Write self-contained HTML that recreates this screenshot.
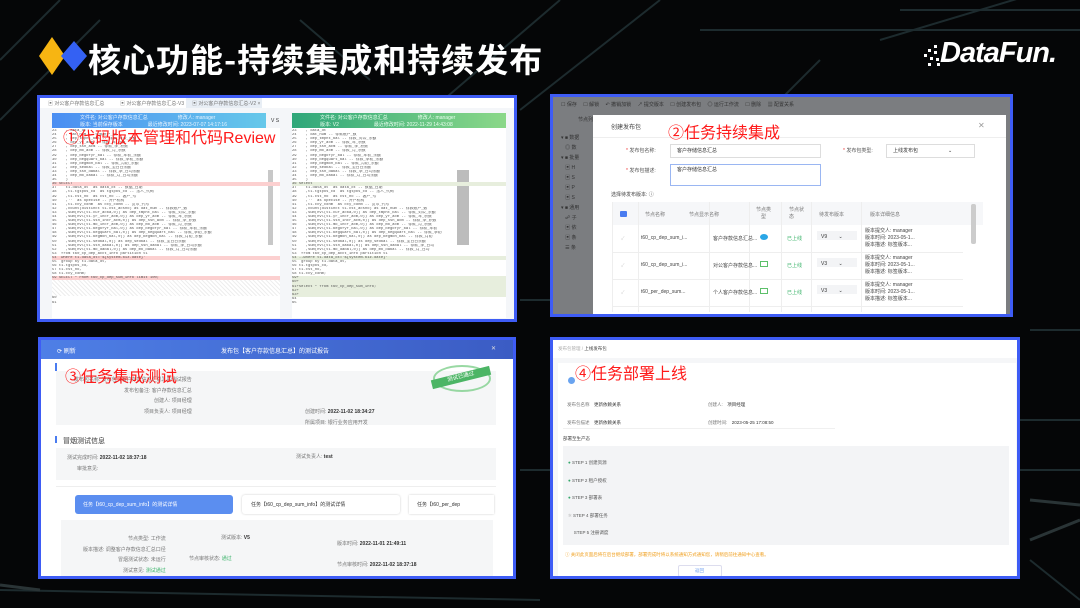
<!DOCTYPE html>
<html><head><meta charset="utf-8">
<style>
*{margin:0;padding:0;box-sizing:border-box}
body{width:1080px;height:608px;overflow:hidden;background:#050607;font-family:"Liberation Sans","Noto Sans CJK SC",sans-serif;position:relative}
.abs{position:absolute}
.panel{position:absolute;border:3px solid #3e5cf5;background:#fff;overflow:hidden}
.red{position:absolute;color:#ff1a1a;font-size:16px;white-space:nowrap;z-index:5}
.code{position:absolute;font-family:"Liberation Mono",monospace;font-size:3.8px;line-height:4.1px;color:#555}
.code div{height:4.1px;overflow:hidden;white-space:pre}
.pk{background:#fcd0d0}
.gr{background:#e7eedd}
.t{font-size:6px;color:#666;white-space:nowrap;position:absolute}
.s{font-size:5px;color:#777;white-space:nowrap;position:absolute}
</style></head><body>
<svg class="abs" style="left:0;top:0" width="1080" height="608">
<g stroke="#1d2b2e" stroke-width="2" fill="none">
<path d="M560 0 L420 120 M660 0 L520 110 M820 60 L620 260 M900 10 L1080 10 M700 30 L1080 30 M880 40 L1080 -20 M0 60 L60 0 M0 120 L100 20 M300 20 L370 80"/>
<path d="M1030 330 L1080 330 M1020 420 L1080 420 M1020 470 L1080 470 M1030 560 L1080 600 M0 590 L540 600 M520 300 L550 300 M520 470 L550 470"/>
</g>
<g stroke="#2a3436" stroke-width="3" fill="none"><path d="M1030 540 L1080 520 M1030 500 L1080 505 M0 585 L40 590"/></g>
</svg>
<svg class="abs" style="left:39px;top:37px" width="50" height="38">
<polygon points="13,0 26,19 13,38 0,19" fill="#f7b512"/>
<polygon points="35,4 48,19 35,34 22,19" fill="#3461f3"/>
</svg>
<div class="abs" style="left:88px;top:34px;color:#fff;font-size:33px;font-weight:bold;letter-spacing:1px;font-family:'Noto Sans CJK SC',sans-serif">核心功能-持续集成和持续发布</div>
<svg class="abs" style="left:924px;top:45px" width="20" height="22"><g fill="#fff"><rect x="10" y="0" width="3" height="3"/><rect x="4" y="4" width="3" height="3"/><rect x="10" y="6" width="3" height="3"/><rect x="0" y="9" width="3" height="3"/><rect x="6" y="12" width="3" height="3"/><rect x="12" y="13" width="3" height="3"/><rect x="4" y="18" width="3" height="3"/><rect x="13" y="18" width="3" height="3"/></g></svg>
<div class="abs" style="left:940px;top:37px;color:#fff;font-size:29px;font-weight:bold;font-style:italic;letter-spacing:-1px">DataFun.</div>

<!-- PANEL 1 -->
<div class="panel" style="left:37px;top:95px;width:480px;height:227px;background:#f4f6f9">
 <div class="abs" style="left:0;top:0;width:474px;height:10px;background:#fff"></div>
 <div class="s" style="left:8px;top:2px">▣ 对公客户存款信息汇总</div>
 <div class="s" style="left:80px;top:2px">▣ 对公客户存款信息汇总-V3</div>
 <div class="abs" style="left:146px;top:0;width:76px;height:10px;background:#e8eef5"></div>
 <div class="s" style="left:152px;top:2px">▣ 对公客户存款信息汇总-V2 ×</div>
 <div class="abs" style="left:12px;top:15px;width:214px;height:15px;background:linear-gradient(90deg,#4b8ef2,#66c8ea)"></div>
 <div class="s" style="left:40px;top:16px;color:#e8f4ff">文件名: 对公客户存款信息汇总　　　　　　修改人: manager<br>版本: 当前保存版本　　　　　最近修改时间: 2023-07-07 14:17:16</div>
 <div class="abs" style="left:252px;top:15px;width:214px;height:15px;background:linear-gradient(90deg,#2fa77a,#8bd889)"></div>
 <div class="s" style="left:280px;top:16px;color:#eaffef">文件名: 对公客户存款信息汇总　　　　　　修改人: manager<br>版本: V2　　　　　　　最近修改时间: 2022-11-29 14:43:08</div>
 <div class="s" style="left:231px;top:20px;color:#333">V S</div>
 <div class="abs" style="left:12px;top:30px;width:228px;height:190px;background:#fff"></div>
 <div class="abs" style="left:252px;top:30px;width:214px;height:190px;background:#fff"></div>
 <div class="abs" style="left:228px;top:72px;width:5px;height:75px;background:#c8c8c8"></div>
 <div class="abs" style="left:417px;top:72px;width:12px;height:75px;background:#bcbcbc"></div>
 <div class="code" style="left:12px;top:31px;width:228px"><div>23    , data_dt</div><div>24    , dat_num -- 存款账户_数</div><div>25    , dep_tmpnt_bal -- 存款_对公_余额</div><div>26    , dep_yr_acm -- 存款_年_积数</div><div>27    , dep_ssn_acm -- 存款_季_积数</div><div>28    , dep_mo_acm -- 存款_月_积数</div><div>29    , dep_begofyr_bal -- 存款_年初_余额</div><div>30    , dep_begquart_bal -- 存款_季初_余额</div><div>31    , dep_begmon_bal -- 存款_月初_余额</div><div>32    , dep_sedbal -- 存款_至日日余额</div><div>33    , dep_ssn_dabal -- 存款_季_日均余额</div><div>34    , dep_mo_dabal -- 存款_月_日均余额</div><div>35    )</div><div class="pk">36 SELECT</div><div>37    t1.data_dt  as data_dt -- 数据_日期</div><div>38    ,t1.tgtpos_cd  as tgtpos_cd -- 法人_代码</div><div>39    ,t1.cst_no  as cst_no -- 客户_号</div><div>40    ,''  as opecise -- 开户机构</div><div>41    ,t1.ccy_cdnm  as ccy_cdnm -- 货币_代号</div><div>42    ,count(distinct t1.cst_acsno) as dat_num -- 存款账户_数</div><div>43    ,sum(nvl(t1.cur_acba,0)) as dep_tmpnt_bal -- 存款_对公_余额</div><div>44    ,sum(nvl(t1.yr_incr_acm,0)) as dep_yr_acm -- 存款_年_积数</div><div>45    ,sum(nvl(t1.ssn_incr_acm,0)) as dep_ssn_acm -- 存款_季_积数</div><div>46    ,sum(nvl(t1.mo_incr_acm,0)) as dep_mo_acm -- 存款_月_积数</div><div>47    ,sum(nvl(t1.begofyr_bal,0)) as dep_begofyr_bal -- 存款_年初_余额</div><div>48    ,sum(nvl(t1.begquart_bal,0)) as dep_begquart_bal -- 存款_季初_余额</div><div>49    ,sum(nvl(t1.begmon_bal,0)) as dep_begmon_bal -- 存款_月初_余额</div><div>50    ,sum(nvl(t1.sedbal,0)) as dep_sedbal -- 存款_至日日余额</div><div>51    ,sum(nvl(t1.ssn_dabal,0)) as dep_ssn_dabal -- 存款_季_日均余额</div><div>52    ,sum(nvl(t1.mo_dabal,0)) as dep_mo_dabal -- 存款_月_日均余额</div><div>53  from t60_cp_dep_acct_info partition t1</div><div class="pk">54  where t1.data_dt='${system.biz.date}'</div><div>55  group by t1.data_dt,</div><div>56 t1.tgtpos_cd,</div><div>57 t1.cst_no,</div><div>58 t1.ccy_cdnm;</div><div class="pk">59 SELECT * FROM t60_cp_dep_sum_info limit 100;</div><div style="height:16px;background:repeating-linear-gradient(45deg,#eee 0 1px,#fff 1px 3px)"></div><div>60</div><div>61</div></div>
 <div class="code" style="left:252px;top:31px;width:214px"><div>23    , data_dt</div><div>24    , dat_num -- 存款账户_数</div><div>25    , dep_tmpnt_bal -- 存款_对公_余额</div><div>26    , dep_yr_acm -- 存款_年_积数</div><div>27    , dep_ssn_acm -- 存款_季_积数</div><div>28    , dep_mo_acm -- 存款_月_积数</div><div>29    , dep_begofyr_bal -- 存款_年初_余额</div><div>30    , dep_begquart_bal -- 存款_季初_余额</div><div>31    , dep_begmon_bal -- 存款_月初_余额</div><div>32    , dep_sedbal -- 存款_至日日余额</div><div>33    , dep_ssn_dabal -- 存款_季_日均余额</div><div>34    , dep_mo_dabal -- 存款_月_日均余额</div><div>35    )</div><div class="gr">36 select</div><div>37    t1.data_dt  as data_dt -- 数据_日期</div><div>38    ,t1.tgtpos_cd  as tgtpos_cd -- 法人_代码</div><div>39    ,t1.cst_no  as cst_no -- 客户_号</div><div>40    ,''  as opecise -- 开户机构</div><div>41    ,t1.ccy_cdnm  as ccy_cdnm -- 货币_代号</div><div>42    ,count(distinct t1.cst_acsno) as dat_num -- 存款账户_数</div><div>43    ,sum(nvl(t1.cur_acba,0)) as dep_tmpnt_bal -- 存款_对公_余额</div><div>44    ,sum(nvl(t1.yr_incr_acm,0)) as dep_yr_acm -- 存款_年_积数</div><div>45    ,sum(nvl(t1.ssn_incr_acm,0)) as dep_ssn_acm -- 存款_季_积数</div><div>46    ,sum(nvl(t1.mo_incr_acm,0)) as dep_mo_acm -- 存款_月_积数</div><div>47    ,sum(nvl(t1.begofyr_bal,0)) as dep_begofyr_bal -- 存款_年初</div><div>48    ,sum(nvl(t1.begquart_bal,0)) as dep_begquart_bal -- 存款_季初</div><div>49    ,sum(nvl(t1.begmon_bal,0)) as dep_begmon_bal -- 存款_月初</div><div>50    ,sum(nvl(t1.sedbal,0)) as dep_sedbal -- 存款_至日日余额</div><div>51    ,sum(nvl(t1.ssn_dabal,0)) as dep_ssn_dabal -- 存款_季_日均</div><div>52    ,sum(nvl(t1.mo_dabal,0)) as dep_mo_dabal -- 存款_月_日均</div><div>53  from t60_cp_dep_acct_info partition t1</div><div class="gr">54 --where t1.data_dt='${system.biz.date}'</div><div>55  group by t1.data_dt,</div><div>56 t1.tgtpos_cd,</div><div>57 t1.cst_no,</div><div>58 t1.ccy_cdnm;</div><div class="gr">59+</div><div class="gr">60+</div><div class="gr">61+select * from t60_cp_dep_sum_info;</div><div class="gr">62+</div><div class="gr">63+</div><div>64</div><div>65</div></div>
 <div class="red" style="left:23px;top:26px">①代码版本管理和代码Review</div>
</div>

<!-- PANEL 2 -->
<div class="panel" style="left:550px;top:94px;width:463px;height:223px;background:#7b7d80">
 <div class="s" style="left:8px;top:4px;color:#333">☐ 保存　 ☐ 解锁　 ↶ 撤销加锁　 ↗ 提交版本　 ☐ 创建发布包　 ◎ 运行工作流　 ☐ 删除　 ▦ 配置关系</div>
 <div class="s" style="left:25px;top:19px;color:#333">节点列</div>
 <div class="s" style="left:8px;top:36px;color:#333;line-height:10px">▾ ■ 数据<br>&nbsp;&nbsp;&nbsp;◎ 数<br>▾ ■ 批量<br>&nbsp;&nbsp;&nbsp;▣ H<br>&nbsp;&nbsp;&nbsp;▣ S<br>&nbsp;&nbsp;&nbsp;▣ P<br>&nbsp;&nbsp;&nbsp;▣ S<br>▾ ■ 通用<br>&nbsp;&nbsp;&nbsp;☍ 子<br>&nbsp;&nbsp;&nbsp;▣ 依<br>&nbsp;&nbsp;&nbsp;▣ 条<br>&nbsp;&nbsp;&nbsp;☰ 条</div>
 <div class="abs" style="left:40px;top:18px;width:413px;height:205px;background:#fff">
  <div class="t" style="left:18px;top:7px;color:#444">创建发布包</div>
  <div class="t" style="left:385px;top:6px;color:#999;font-size:8px">✕</div>
  <div class="abs" style="left:0;top:22px;width:413px;height:1px;background:#eee"></div>
  <div class="s" style="left:33px;top:32px;color:#555"><span style="color:#e33">*</span> 发布包名称:</div>
  <div class="abs" style="left:77px;top:29px;width:151px;height:14px;border:1px solid #ddd"></div>
  <div class="s" style="left:84px;top:32px;color:#333">客户存储信息汇总</div>
  <div class="s" style="left:250px;top:32px;color:#555"><span style="color:#e33">*</span> 发布包类型:</div>
  <div class="abs" style="left:293px;top:29px;width:89px;height:14px;border:1px solid #ddd"></div>
  <div class="s" style="left:300px;top:32px;color:#333">上线发布包　　　　　　⌄</div>
  <div class="s" style="left:33px;top:52px;color:#555"><span style="color:#e33">*</span> 发布包描述:</div>
  <div class="abs" style="left:77px;top:49px;width:151px;height:22px;border:1px solid #9ab6f2"></div>
  <div class="s" style="left:84px;top:51px;color:#333">客户存储信息汇总</div>
  <div class="s" style="left:18px;top:76px;color:#444">选择待发布版本: ⓘ</div>
  <div class="abs" style="left:19px;top:87px;width:370px;height:110px;border-left:1px solid #eee">
   <div class="abs" style="left:0;top:0;width:370px;height:23px;background:#f6f7f9"></div>
   <div class="abs" style="left:7px;top:9px;width:7px;height:6px;background:#4a7cf0;border-radius:1px"></div>
   <div class="s" style="left:32px;top:9px">节点名称</div>
   <div class="s" style="left:76px;top:9px">节点显示名称</div>
   <div class="s" style="left:143px;top:5px;text-align:center;line-height:7px">节点类<br>型</div>
   <div class="s" style="left:176px;top:5px;line-height:7px">节点状<br>态</div>
   <div class="s" style="left:206px;top:9px">待发布版本</div>
   <div class="s" style="left:257px;top:9px">版本详细信息</div>
   <div class="abs" style="left:0;top:50px;width:350px;height:1px;background:#eee"></div>
   <div class="abs" style="left:0;top:77px;width:350px;height:1px;background:#eee"></div>
   <div class="abs" style="left:0;top:104px;width:350px;height:1px;background:#eee"></div>
   <div class="abs" style="left:25px;top:0;width:1px;height:110px;background:#eee"></div>
   <div class="abs" style="left:96px;top:0;width:1px;height:110px;background:#eee"></div>
   <div class="abs" style="left:136px;top:0;width:1px;height:110px;background:#eee"></div>
   <div class="abs" style="left:168px;top:0;width:1px;height:110px;background:#eee"></div>
   <div class="abs" style="left:198px;top:0;width:1px;height:110px;background:#eee"></div>
   <div class="abs" style="left:248px;top:0;width:1px;height:110px;background:#eee"></div>
   <div class="abs" style="left:358px;top:2px;width:5px;height:40px;background:#ccc;border-radius:2px"></div>
   <div class="s" style="left:8px;top:33px;color:#ccc">✓</div><div class="s" style="left:8px;top:60px;color:#ccc">✓</div><div class="s" style="left:8px;top:87px;color:#ccc">✓</div>
   <div class="s" style="left:28px;top:33px;color:#444">t60_cp_dep_sum_i...</div>
   <div class="s" style="left:28px;top:60px;color:#444">t60_cp_dep_sum_i...</div>
   <div class="s" style="left:28px;top:87px;color:#444">t60_per_dep_sum...</div>
   <div class="s" style="left:100px;top:33px;color:#444">客户存款信息汇总...</div>
   <div class="s" style="left:100px;top:60px;color:#444">对公客户存款信息...</div>
   <div class="s" style="left:100px;top:87px;color:#444">个人客户存款信息...</div>
   <div class="abs" style="left:147px;top:32px;width:8px;height:6px;background:#2aa6e6;border-radius:50%"></div>
   <div class="abs" style="left:147px;top:59px;width:8px;height:6px;border:1px solid #5cc06a"></div>
   <div class="abs" style="left:147px;top:86px;width:8px;height:6px;border:1px solid #5cc06a"></div>
   <div class="s" style="left:174px;top:33px;color:#3bb36a">已上线</div>
   <div class="s" style="left:174px;top:60px;color:#3bb36a">已上线</div>
   <div class="s" style="left:174px;top:87px;color:#3bb36a">已上线</div>
   <div class="abs" style="left:204px;top:29px;width:40px;height:9px;background:#f3f4f6"></div>
   <div class="abs" style="left:204px;top:56px;width:40px;height:9px;background:#f3f4f6"></div>
   <div class="abs" style="left:204px;top:83px;width:40px;height:9px;background:#f3f4f6"></div>
   <div class="s" style="left:208px;top:31px;color:#333">V9　　 ⌄</div>
   <div class="s" style="left:208px;top:58px;color:#333">V3　　 ⌄</div>
   <div class="s" style="left:208px;top:85px;color:#333">V3　　 ⌄</div>
   <div class="s" style="left:252px;top:26px;color:#444;line-height:7px">版本提交人: manager<br>版本时间: 2023-05-1...<br>版本描述: 标签版本...</div>
   <div class="s" style="left:252px;top:53px;color:#444;line-height:7px">版本提交人: manager<br>版本时间: 2023-05-1...<br>版本描述: 标签版本...</div>
   <div class="s" style="left:252px;top:80px;color:#444;line-height:7px">版本提交人: manager<br>版本时间: 2023-05-1...<br>版本描述: 标签版本...</div>
  </div>
 </div>
 <div class="red" style="left:115px;top:22px">②任务持续集成</div>
</div>

<!-- PANEL 3 -->
<div class="panel" style="left:38px;top:337px;width:478px;height:242px;background:#fff">
 <div class="abs" style="left:0;top:0;width:472px;height:19px;background:linear-gradient(90deg,#4e7fe6,#3b5cc4)"></div>
 <div class="s" style="left:16px;top:6px;color:#fff;font-size:6px">⟳ 刷新</div>
 <div class="s" style="left:180px;top:6px;color:#fff;font-size:6px">发布包【客户存款信息汇总】的测试报告</div>
 <div class="s" style="left:450px;top:5px;color:#ddd;font-size:6px">✕</div>
 <div class="abs" style="left:15px;top:31px;width:440px;height:54px;background:#f5f6f7"></div>
 <div class="abs" style="left:14px;top:23px;width:2px;height:8px;background:#4a7cf0"></div>
 <div class="s" style="left:33px;top:35px;line-height:10.7px;text-align:right">发布包名称: 发布包【客户存款信息汇总】的测试报告<br>发布包备注: 客户存款信息汇总<br>　创建人: 项目经理<br>项目负责人: 项目经理</div>
 <div class="s" style="left:264px;top:67px;line-height:10.7px">创建时间: <b style="color:#333">2022-11-02 18:34:27</b><br>所属项目: 银行业务应用开发</div>
 <div class="abs" style="left:392px;top:25px;width:58px;height:27px;border:2px solid #7fcf8c;border-radius:50%;opacity:.8"></div>
 <div class="abs" style="left:390px;top:33px;width:60px;height:9px;background:#4cb565;transform:rotate(-14deg);color:#fff;font-size:5.5px;text-align:center;line-height:9px">测试已通过</div>
 <div class="abs" style="left:14px;top:96px;width:2px;height:7px;background:#4a7cf0"></div>
 <div class="t" style="left:22px;top:96px;color:#333;font-size:7px">冒烟测试信息</div>
 <div class="abs" style="left:15px;top:108px;width:440px;height:32px;background:#f5f6f7"></div>
 <div class="s" style="left:26px;top:113px;line-height:10.7px">测试完成时间: <b style="color:#333">2022-11-02 18:37:18</b><br>　　审批意见:</div>
 <div class="s" style="left:255px;top:113px">测试负责人: <b style="color:#333">test</b></div>
 <div class="abs" style="left:15px;top:146px;width:440px;height:1px;background:#eee"></div>
 <div class="abs" style="left:34px;top:155px;width:158px;height:19px;background:#5b8ef0;border-radius:3px"></div>
 <div class="s" style="left:42px;top:161px;color:#fff">任务【t60_cp_dep_sum_info】的测试详情</div>
 <div class="abs" style="left:201px;top:155px;width:158px;height:19px;background:#fff;border-radius:3px;box-shadow:0 0 2px #ccc"></div>
 <div class="s" style="left:210px;top:161px;color:#333">任务【t60_cp_dep_sum_info】的测试详情</div>
 <div class="abs" style="left:368px;top:155px;width:85px;height:19px;background:#fff;box-shadow:0 0 2px #ccc;overflow:hidden"><div class="s" style="left:8px;top:6px;color:#333">任务【t60_per_dep</div></div>
 <div class="abs" style="left:20px;top:180px;width:432px;height:57px;background:#f5f6f7"></div>
 <div class="s" style="left:42px;top:194px;line-height:10.7px;text-align:right">节点类型: 工作流<br>版本描述: 调整客户存款信息汇总口径<br>冒烟测试状态: 未运行<br>　测试意见: <span style="color:#3bb36a">测试通过</span></div>
 <div class="s" style="left:180px;top:194px">测试版本: <b style="color:#333">V5</b></div>
 <div class="s" style="left:148px;top:215px">节点审核状态: <span style="color:#3bb36a">通过</span></div>
 <div class="s" style="left:296px;top:194px;line-height:21.4px">版本时间: <b style="color:#333">2022-11-01 21:49:11</b><br>节点审核时间: <b style="color:#333">2022-11-02 18:37:18</b></div>
 <div class="red" style="left:24px;top:23px">③任务集成测试</div>
</div>

<!-- PANEL 4 -->
<div class="panel" style="left:550px;top:337px;width:470px;height:242px;background:#f5f6f8">
 <div class="abs" style="left:0;top:0;width:464px;height:18px;background:#fff"></div>
 <div class="s" style="left:5px;top:6px;color:#aaa;font-size:4.5px">发布包管理 / <span style="color:#444">上线发布包</span></div>
 <div class="abs" style="left:5px;top:23px;width:458px;height:213px;background:#fff"></div>
 <div class="abs" style="left:15px;top:37px;width:7px;height:7px;background:#6aa4f0;border-radius:50%"></div>
 <div class="s" style="left:14px;top:56px;font-size:4.5px;line-height:17.5px">发布包名称　<span style="color:#333">更新依赖关系</span><br>发布包描述　<span style="color:#333">更新依赖关系</span></div>
 <div class="s" style="left:155px;top:56px;font-size:4.5px;line-height:17.5px">创建人:　<span style="color:#333">项目经理</span><br>创建时间:　<span style="color:#333">2023-05-25 17:08:50</span></div>
 <div class="abs" style="left:10px;top:88px;width:272px;height:1px;background:#f0f0f0"></div>
 <div class="s" style="left:10px;top:96px;font-size:4.5px;color:#444">部署至生产态</div>
 <div class="abs" style="left:10px;top:106px;width:446px;height:99px;background:#f3f4f6"></div>
 <div class="s" style="left:15px;top:114px;font-size:4.5px;color:#555;line-height:17.5px"><span style="color:#35a86b">●</span> STEP 1 创建资源<br><span style="color:#35a86b">●</span> STEP 2 租户授权<br><span style="color:#35a86b">●</span> STEP 3 部署表<br><span style="color:#bbb">✲</span> STEP 4 部署任务<br>　 STEP 5 注册调度</div>
 <div class="s" style="left:12px;top:212px;font-size:4.5px;color:#f0a020">ⓘ 关闭此页面后将在后台继续部署，部署完成时将以系统通知方式通知您，请稍后前往通知中心查看。</div>
 <div class="abs" style="left:125px;top:225px;width:44px;height:12px;border:1px solid #dde;border-radius:2px;background:#fff"></div>
 <div class="s" style="left:142px;top:228px;font-size:4.5px;color:#6a9cf0">返回</div>
 <div class="red" style="left:22px;top:20px">④任务部署上线</div>
</div>
</body></html>
